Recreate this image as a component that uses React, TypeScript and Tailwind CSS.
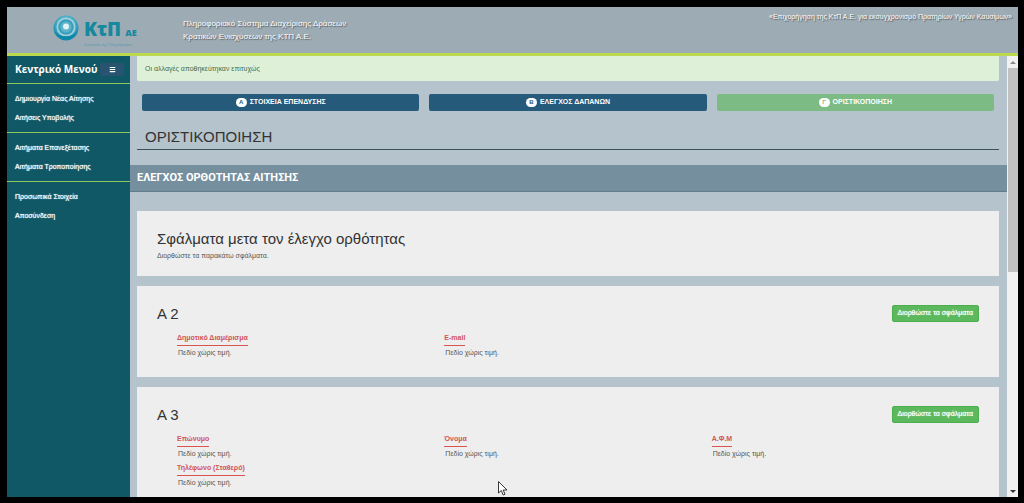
import type { ReactNode } from "react";
import { Menu } from "lucide-react";

const menuGroups = [
  ["Δημιουργία Νέας Αίτησης", "Αιτήσεις Υποβολής"],
  ["Αιτήματα Επανεξέτασης", "Αιτήματα Τροποποίησης"],
  ["Προσωπικά Στοιχεία", "Αποσύνδεση"],
];

const steps = [
  { letter: "Α", label: "ΣΤΟΙΧΕΙΑ ΕΠΕΝΔΥΣΗΣ", current: false },
  { letter: "Β", label: "ΕΛΕΓΧΟΣ ΔΑΠΑΝΩΝ", current: false },
  { letter: "Γ", label: "ΟΡΙΣΤΙΚΟΠΟΙΗΣΗ", current: true },
];

const sections = [
  { title: "Α 2", fields: ["Δημοτικό Διαμέρισμα", "E-mail"] },
  { title: "Α 3", fields: ["Επώνυμο", "Όνομα", "Α.Φ.Μ", "Τηλέφωνο (Σταθερό)"] },
];

function Logo() {
  return (
    <div className="flex items-start gap-[5px] text-[#16899f]">
      <svg viewBox="0 0 26 26" className="size-[26px]" aria-hidden="true">
        <defs>
          <radialGradient id="orb" cx="0.5" cy="0.38" r="0.6">
            <stop offset="0" stopColor="#b9e2ec" />
            <stop offset="0.55" stopColor="#4fb3cb" />
            <stop offset="1" stopColor="#0f86a6" />
          </radialGradient>
        </defs>
        <circle cx="13" cy="13" r="12.5" fill="url(#orb)" />
        <circle cx="13" cy="12" r="9.5" fill="#a3d0dc" />
        <circle cx="13" cy="12" r="7.8" fill="#3a9fbc" />
        <circle cx="13" cy="12" r="5.6" fill="#5fb4ca" />
        <circle cx="13" cy="11.5" r="3" fill="#e2f3f6" />
        <path d="M1.5 16a12 12 0 0 0 23 0a13 10 0 0 1-23 0z" fill="#0d87a8" />
      </svg>
      <div className="pt-1">
        <div className="flex items-baseline gap-1 font-['Open_Sans',sans-serif] leading-5 font-extrabold">
          <span className="text-[19px] leading-5">ΚτΠ</span>
          <span className="text-[9px] leading-5">ΑΕ</span>
        </div>
        <div className="h-[3px] text-[4px] leading-[3px] whitespace-nowrap text-[#5b9bb0]">
          Κοινωνία της Πληροφορίας
        </div>
      </div>
    </div>
  );
}

function Card({ children }: { children: ReactNode }) {
  return <section className="bg-[#eeeeee] px-5">{children}</section>;
}

export default function App() {
  return (
    <div className="h-screen bg-black pt-[7px] pr-[6px] pb-[6px] pl-[7px] font-['Liberation_Sans',Arial,sans-serif] text-[7px] text-[#555]">
      <div className="flex h-full flex-col overflow-hidden bg-[#b5c3cd]">
        <header className="flex h-[49px] shrink-0 items-start border-b-[3px] border-[#bcd84e] bg-[#9dabb4] text-white">
          <div className="w-44 pt-2 pl-[46px]">
            <Logo />
          </div>
          <p className="pt-[10px] text-[8px] leading-[13px] [text-shadow:1px_1px_1px_#555]">
            Πληροφοριακό Σύστημα Διαχείρισης Δράσεων
            <br />
            Κρατικών Ενισχύσεων της ΚΤΠ Α.Ε.
          </p>
          <p className="ml-auto pt-[5px] pr-[6px] leading-[10px] [text-shadow:1px_1px_1px_#555]">
            «Επιχορήγηση της ΚτΠ Α.Ε. για εκσυγχρονισμό Πρατηρίων Υγρών Καυσίμων»
          </p>
        </header>

        <div className="flex min-h-0 flex-1">
          <nav className="w-[123px] shrink-0 bg-[#115866] text-white">
            <div className="flex h-7 items-center justify-between border-b border-[#8fc95c] pr-[6px] pl-2">
              <h2 className="font-['Open_Sans',sans-serif] text-[10px] font-bold whitespace-nowrap">Κεντρικό Μενού</h2>
              <button aria-label="Μενού" className="flex h-[13px] w-6 items-center justify-center rounded-xs bg-[#285472]">
                <Menu className="size-[7px]" strokeWidth={4} />
              </button>
            </div>
            {menuGroups.map((group, i) => (
              <ul
                key={i}
                className="border-b border-[#8fc95c] px-2 py-[5px] [text-shadow:0_0_1px_#fff] last:border-b-0"
              >
                {group.map((item) => (
                  <li key={item} className="h-[19px] leading-[19px]">
                    <a href="#">{item}</a>
                  </li>
                ))}
              </ul>
            ))}
          </nav>

          <main className="min-w-0 flex-1 overflow-hidden">
            <div className="mr-2 ml-[7px]">
              <div role="status" className="rounded-b-xs bg-[#dff0d8] px-2 leading-[25px] text-[#466b46]">
                Οι αλλαγές αποθηκεύτηκαν επιτυχώς
              </div>
              <div className="mt-[13px] grid grid-cols-3 gap-[10px] px-[5px]">
                {steps.map((s) => (
                  <button
                    key={s.label}
                    className={`flex h-[17px] items-center justify-center gap-[3px] rounded-xs font-bold text-white ${s.current ? "bg-[#7cbc84]" : "bg-[#265a7b]"}`}
                  >
                    <span className={`flex h-[9px] w-[11px] items-center justify-center rounded-full bg-white text-[6px] ${s.current ? "text-[#7cbc84]" : "text-[#265a7b]"}`}>
                      {s.letter}
                    </span>
                    <span>{s.label}</span>
                  </button>
                ))}
              </div>
              <h1 className="mt-[14px] border-b border-[#3c4f5c] px-2 text-[15px] leading-6 text-[#333]">
                ΟΡΙΣΤΙΚΟΠΟΙΗΣΗ
              </h1>
            </div>
            <h2 className="mt-[15px] mb-[19px] border-b border-[#5f7d8e] bg-[#758f9e] px-[7px] font-[Roboto,sans-serif] text-[11px] leading-[26px] font-bold text-white">
              ΕΛΕΓΧΟΣ ΟΡΘΟΤΗΤΑΣ ΑΙΤΗΣΗΣ
            </h2>
            <div className="mr-2 ml-[7px] flex flex-col gap-[10px]">
              <Card>
                <h3 className="pt-[19px] text-[15px] leading-[18px] text-[#333]">Σφάλματα μετα τον έλεγχο ορθότητας</h3>
                <p className="pt-[2px] pb-[15px] leading-[11px]">Διορθώστε τα παρακάτω σφάλματα.</p>
              </Card>
              {sections.map((s) => (
                <Card key={s.title}>
                  <div className="flex items-start justify-between pt-[19px]">
                    <h3 className="text-[15px] leading-[18px] text-[#333]">{s.title}</h3>
                    <button className="h-[17px] rounded-xs border border-[#4cae4c] bg-[#5cb85c] px-[5px] text-white [text-shadow:0_0_1px_#fff]">
                      Διορθώστε τα σφάλματα
                    </button>
                  </div>
                  <dl className="grid grid-cols-3 pt-2 pb-[17px] pl-5">
                    {s.fields.map((f) => (
                      <div key={f} className="h-[29px]">
                        <dt className="flex">
                          <span className="border-b border-[#d9534f] leading-[14px] font-bold text-[#d05558]">{f}</span>
                        </dt>
                        <dd className="pl-px leading-[13px]">Πεδίο χώρις τιμή.</dd>
                      </div>
                    ))}
                  </dl>
                </Card>
              ))}
            </div>
          </main>

          <div aria-hidden="true" className="flex w-[11px] shrink-0 flex-col items-center bg-[#f1f1f1]">
            <svg viewBox="0 0 6 12" className="h-3 w-[6px] shrink-0">
              <path d="M0 8L3 5L6 8z" fill="#8a8a8a" />
            </svg>
            <div className="min-h-0 flex-1 self-stretch pl-px">
              <div className="h-[49%] bg-[#c1c1c1]" />
            </div>
            <svg viewBox="0 0 6 12" className="h-3 w-[6px] shrink-0">
              <path d="M0 5L3 8L6 5z" fill="#333" />
            </svg>
          </div>
        </div>
      </div>
      <svg viewBox="0 0 10 15" className="absolute top-[481px] left-[498px] h-[15px] w-[10px]" aria-hidden="true">
        <path d="M.5.5V12L3.3 9.5L5.2 14L7 13.2L5.2 9H9z" fill="#fff" stroke="#222" strokeWidth="0.9" />
      </svg>
    </div>
  );
}
